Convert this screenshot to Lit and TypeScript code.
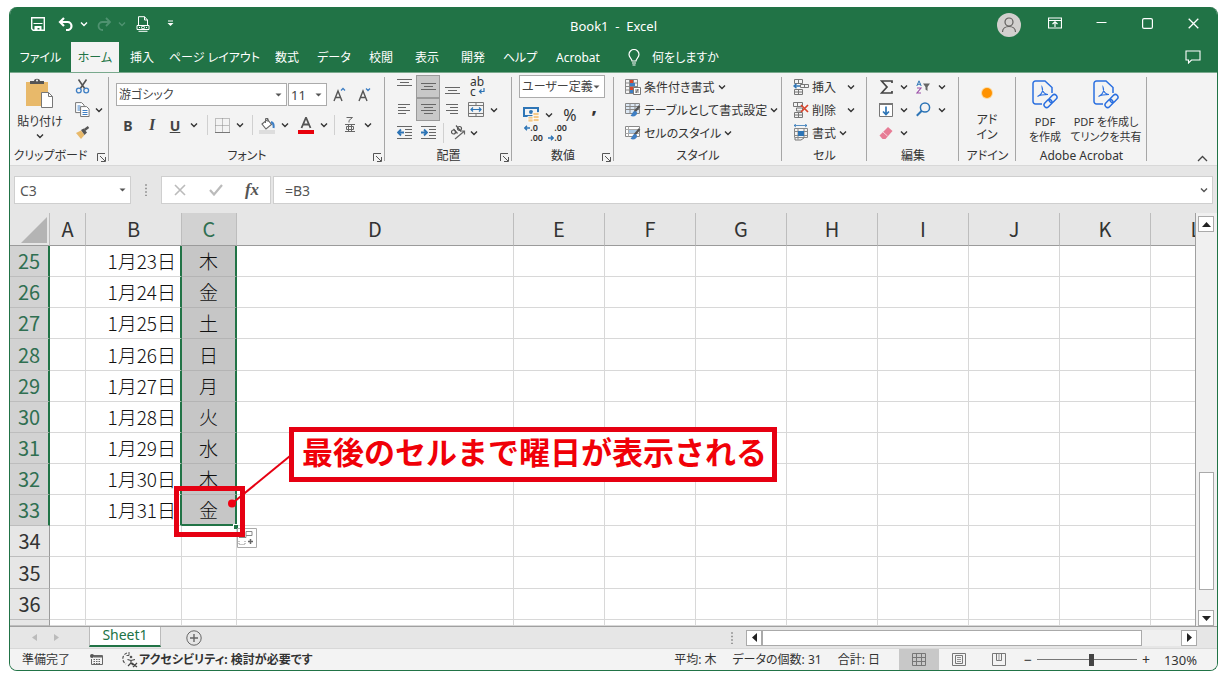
import { LitElement, html, css, svg, TemplateResult, SVGTemplateResult } from "lit";
import { customElement, state } from "lit/decorators.js";
import { classMap } from "lit/directives/class-map.js";

const icon = (w: number, h: number, body: SVGTemplateResult) =>
  html`<svg width=${w} height=${h} viewBox="0 0 ${w} ${h}" fill="none" aria-hidden="true">${body}</svg>`;

const chevron = (color = "#333") =>
  icon(8, 6, svg`<path d="M1 1.5 4 4.5 7 1.5" stroke=${color} stroke-width="1.4"/>`);

const caret = () => icon(7, 4, svg`<path d="M0.5 0.5h6L3.5 3.5z" fill="#555"/>`);

const lines = (rows: number[][]) =>
  svg`${rows.map(([x, y, w]) => svg`<path d="M${x} ${y + 0.5}h${w}" stroke="#666" stroke-width="1"/>`)}`;

const icons = {
  save: icon(14, 14, svg`<path d="M.7.7h12.6v12.6H2.2L.7 11.8z" stroke="#fff" stroke-width="1.4"/><path d="M2.5 6.500h9" stroke="#fff" stroke-width="1.2"/><path d="M3.5 9h7v4.5h-2V11h-2v2.5h-3z" fill="#fff"/>`),
  undo: icon(16, 14, svg`<path d="M6 1 2 5l4 4M2 5h7.5a4 4 0 0 1 0 8H8" stroke="#fff" stroke-width="2.200"/>`),
  redo: icon(16, 14, svg`<path d="m10 1 4 4-4 4M14 5H6.5a4 4 0 0 0 0 8H7" stroke="#4f9270" stroke-width="1.8"/>`),
  print: icon(14, 16, svg`<path d="M2.5 9V.7h6L11.500 4v5M8.500.7V4h3" stroke="#fff"/><path d="M1 9.500h12v4H1z" stroke="#fff"/><circle cx="7" cy="11.500" r="1.500" stroke="#fff"/><path d="M3 11.500h1m6 0h1M2.500 15.300h9" stroke="#fff"/>`),
  more: icon(7, 7, svg`<path d="M1 1h5" stroke="#fff"/><path d="M.5 3h6l-3 3z" fill="#fff"/>`),
  avatar: icon(24, 24, svg`<circle cx="12" cy="12" r="12" fill="#d2d0ce"/><circle cx="12" cy="9" r="4" stroke="#605e5c" stroke-width="1.2"/><path d="M5.500 19c0-3.500 3-5.500 6.500-5.500s6.500 2 6.500 5.500" stroke="#605e5c" stroke-width="1.2"/>`),
  ribbonMode: icon(14, 12, svg`<path d="M.5 1h13v10H.5zM.5 3.500h13" stroke="#fff" stroke-width="1.200"/><path d="M7 10V5M4.500 7 7 4.700 9.500 7" stroke="#fff" stroke-width="1.200"/>`),
  min: icon(11, 11, svg`<path d="M.5 4.500h10" stroke="#fff"/>`),
  max: icon(11, 11, svg`<rect x=".6" y=".6" width="9.800" height="9.800" rx="1.500" stroke="#fff" stroke-width="1.200"/>`),
  close: icon(11, 11, svg`<path d="m.7.7 9.600 9.600M10.300.7.7 10.300" stroke="#fff" stroke-width="1.300"/>`),
  comment: icon(16, 14, svg`<path d="M1 1h14v9H6.500L3.500 13v-3H1z" stroke="#fff" stroke-width="1.100"/>`),
  bulb: icon(12, 17, svg`<path d="M4 12c0-2-3-3.500-3-6.500a5 5 0 0 1 10 0C11 8.500 8 10 8 12z" stroke="#fff" stroke-width="1.200"/><path d="M4 14h4M4.500 16h3" stroke="#fff" stroke-width="1.200"/>`),
  paste: icon(30, 32, svg`<rect x="1" y="4" width="22" height="24" fill="#e8b96a"/><path d="M5 6V3h4c0-3 6-3 6 0h4v3z" fill="#555"/><circle cx="12" cy="2.500" r="1" fill="#f3f3f3"/><path d="M16.500 14.500h7l4 4v11h-11z" fill="#fff" stroke="#777"/><path d="M23.500 14.500v4h4" stroke="#777"/>`),
  cut: icon(15, 15, svg`<path d="M3.500.5 10 10M11.500.5 5 10" stroke="#555" stroke-width="1.600"/><circle cx="3.800" cy="11.500" r="2.400" stroke="#3f7fc4" stroke-width="1.300"/><circle cx="11.200" cy="11.500" r="2.400" stroke="#3f7fc4" stroke-width="1.300"/>`),
  copy: icon(15, 15, svg`<path d="M.6.6h6l2.500 2.500v7.500H.6z" fill="#fff" stroke="#777"/><path d="M2.500 4h3m-3 2h3m-3 2h3" stroke="#3f7fc4"/><path d="M5.600 4.600h6l2.500 2.500v7.400H5.600z" fill="#fff" stroke="#777"/><path d="M7.500 8.500h5m-5 2h5m-5 2h5" stroke="#3f7fc4"/>`),
  brush: icon(15, 13, svg`<path d="m1 7 5-2.500L9.500 9 6 13z" fill="#e8b96a"/><path d="m6 4 2.500-1.500 3.500 4L9.500 9z" fill="#555"/><path d="m9.500 4 4-3" stroke="#555" stroke-width="2.400"/>`),
  grow: icon(14, 16, svg`<path d="M1 14 5 4l4 10M2.500 10.500h5" stroke="#555" stroke-width="1.400"/><path d="m8 3.500 2-2 2 2" stroke="#3f7fc4" stroke-width="1.300"/>`),
  shrink: icon(14, 16, svg`<path d="M1 14 5 4l4 10M2.500 10.500h5" stroke="#555" stroke-width="1.400"/><path d="m8 1.500 2 2 2-2" stroke="#3f7fc4" stroke-width="1.300"/>`),
  borders: icon(15, 15, svg`<path d="M.5.5h14v14H.5zM7.500.5v14M.5 7.500h14" stroke="#888" stroke-dasharray="1 1"/><path d="M0 14.500h15" stroke="#777"/>`),
  fill: icon(16, 17, svg`<path d="m3 7 5.500-4.500 4 5L7 12z" fill="#fff" stroke="#666" stroke-width="1.100"/><path d="M6.500 6V1.500h2.500V5" stroke="#666"/><path d="M12 5c3 1 3 3 2.500 6" stroke="#3f7fc4" stroke-width="2"/><path d="M0 13h16v4H0z" fill="#ddd"/>`),
  fontColor: icon(16, 17, svg`<path d="M3.500 11 8 .5l4.500 10.500M5 7.500h6" stroke="#555" stroke-width="1.800"/><path d="M0 13h16v4H0z" fill="#e8000b"/>`),
  phonetic: icon(12, 16, svg`<path d="M2.500.5h6L5 3.500v2M1 7.500h10M1 14.500h10M4.500 7.500v7M7.500 7.500v7M2.500 9.500h7v3h-7z" stroke="#666"/>`),
  top: icon(15, 17, lines([[0, 1, 15], [3, 4, 9], [0, 7, 15]])),
  middle: icon(15, 17, lines([[0, 5, 15], [3, 8, 9], [0, 11, 15]])),
  bottom: icon(15, 17, lines([[0, 9, 15], [3, 12, 9], [0, 15, 15]])),
  left: icon(12, 13, lines([[0, 1, 12], [0, 4, 8], [0, 7, 12], [0, 10, 8]])),
  center: icon(15, 13, lines([[0, 1, 15], [3, 4, 9], [0, 7, 15], [3, 10, 9]])),
  right: icon(12, 13, lines([[0, 1, 12], [4, 4, 8], [0, 7, 12], [4, 10, 8]])),
  outdent: icon(15, 13, svg`${lines([[0, 0, 15], [8, 3, 7], [8, 6, 7], [8, 9, 7], [0, 12, 15]])}<path d="M7 6.500H1M4 3.500l-3 3 3 3" stroke="#2e75b6" stroke-width="1.800"/>`),
  indent: icon(15, 13, svg`${lines([[0, 0, 15], [8, 3, 7], [8, 6, 7], [8, 9, 7], [0, 12, 15]])}<path d="M0 6.500h6M3 3.500l3 3-3 3" stroke="#2e75b6" stroke-width="1.800"/>`),
  wrapArrow: icon(7, 7, svg`<path d="M6 0v3.500H1.500M3.500 1.500l-2 2 2 2" stroke="#2e75b6" stroke-width="1.200"/>`),
  merge: icon(16, 15, svg`<path d="M.5.5h15v14H.5zM.5 3.500h15m-15 8h15M8 .5v3m0 8v3" stroke="#777"/><path d="M3 7.500h10M5 5.500l-2 2 2 2m6-4 2 2-2 2" stroke="#2e75b6" stroke-width="1.200"/>`),
  orient: icon(16, 15, svg`<circle cx="3.500" cy="7" r="2" stroke="#555" stroke-width="1.200"/><path d="m3.500 4 4 4.500M6 .5l5 6" stroke="#555" stroke-width="1.200"/><circle cx="9.500" cy="3.500" r="2" stroke="#555" stroke-width="1.200"/><path d="m5 14 9.500-8M11 6h3.500v3.500" stroke="#666" stroke-width="1.200"/>`),
  currency: icon(17, 17, svg`<path d="M1 2h14v8H1z" stroke="#2e75b6" stroke-width="2"/><circle cx="8" cy="6" r="2" fill="#2e75b6"/><g fill="#f4c98a" stroke="#fff" stroke-width=".7"><rect x="10" y="6.500" width="6" height="3"/><rect x="10" y="9.500" width="6" height="3"/><rect x="10" y="12.500" width="6" height="3"/><rect x="5" y="10.500" width="5" height="3"/><rect x="5" y="13" width="5" height="3"/></g>`),
  arrowL: icon(6, 6, svg`<path d="M6 3H1M3 .8.8 3 3 5.200" stroke="#2e75b6" stroke-width="1.400"/>`),
  arrowR: icon(6, 6, svg`<path d="M0 3h5M3 .8 5.200 3 3 5.200" stroke="#2e75b6" stroke-width="1.400"/>`),
  condFormat: icon(16, 16, svg`<path d="M.5.5h12v14H.5zM.5 4h12m-12 3.500h12M.5 11h12M4.500.5v14m4-14v14" stroke="#888"/><path d="M5 1h3v3H5zM5 8h4v3H5z" fill="#d9442b"/><path d="M5 4h5v3H5zM5 11h3v3H5z" fill="#3f7fc4"/><path d="M8.500 8.500h7v7h-7z" fill="#fff" stroke="#777"/><path d="M10 11h4m-4 2h4m-1-3-2 4" stroke="#555" stroke-width=".8"/>`),
  tableFormat: icon(16, 16, svg`<path d="M.5 1.500h14v10H.5zM.5 4.500h14m-14 3h14M5 1.500v10m5-10v10" fill="#dce8f4" stroke="#888"/><path d="m14.500 4-5 6" stroke="#555" stroke-width="2.200"/><path d="M10.500 9c-3 0-3 3-5 4.500 2.500 2 7 .5 6.500-3z" fill="#3f7fc4"/>`),
  cellStyle: icon(16, 16, svg`<path d="M.5 1.500h14v10H.5z" fill="#fff" stroke="#888"/><path d="M4 4.500h8v4H4z" fill="#a9c9e6"/><path d="M3.500 1.500v10M.5 4.500h14m-14 4h14" stroke="#aaa"/><path d="m14.500 4-5 6" stroke="#555" stroke-width="2.200"/><path d="M10.500 9c-3 0-3 3-5 4.500 2.500 2 7 .5 6.500-3z" fill="#3f7fc4"/>`),
  insert: icon(16, 16, svg`<path d="M1.500.5h8v4h-8zm4 0v4M1.500 10.500h8v5h-8zm0 2.500h8m-4-2.500v5M7.500 5.500h8v3h-8zm4 0v3" stroke="#777"/><path d="M7 7H1M3.500 4.800 1 7l2.500 2.200" stroke="#2e75b6" stroke-width="1.400"/>`),
  remove: icon(16, 16, svg`<path d="M.5.5h9v4h-9zm4 0v4M3.500 6h6v3h-6zM1.500 10.500h8v5h-8zm0 2.500h8m-4-2.500v5" stroke="#777"/><path d="m8 3 7 7m0-7-7 7" stroke="#d9442b" stroke-width="1.700"/>`),
  format: icon(16, 17, svg`<path d="M1 1.500h13M3 0 1 1.500 3 3m9-3 2 1.500L12 3" stroke="#2e75b6" stroke-width=".8"/><path d="M1.500 4.500h13v9h-13zM1.500 7.500h13m-13 4h13M5 4.500v11m6-11v9" stroke="#888"/><path d="M5 7h6v5H5z" fill="#2e75b6"/><path d="M2 14v2h6l3-2" stroke="#777"/>`),
  sigma: icon(13, 14, svg`<path d="M12 3V1H1.500L7 7l-5.500 6H12v-2" stroke="#444" stroke-width="1.700"/>`),
  fillDown: icon(14, 14, svg`<path d="M.5.5h13v13H.5z" fill="#fff" stroke="#777"/><path d="M0 1h14" stroke="#777" stroke-width="2"/><path d="M7 3.500v8M4 8.500l3 3 3-3" stroke="#2e75b6" stroke-width="1.700"/>`),
  eraser: icon(14, 12, svg`<path d="m9 0 4.500 4L6.500 12H3.500L.5 8.500z" fill="#e77c95"/><path d="m4 5 4.500 4" stroke="#f8d3da"/>`),
  sort: icon(15, 14, svg`<path d="M.8 6 3 .8 5.200 6M1.500 4.300h3" stroke="#2e75b6"/><path d="M1 8h4l-4 5h4" stroke="#9b4fa8" stroke-width="1.100"/><path d="M7 3.500h7L11.500 7v4L9.500 9.500V7z" fill="#666"/>`),
  find: icon(15, 15, svg`<circle cx="9" cy="5.500" r="4.600" stroke="#2e75b6" stroke-width="1.500"/><path d="m5.800 8.800-5 5" stroke="#2e75b6" stroke-width="2"/>`),
  addin: icon(14, 14, svg`<circle cx="7" cy="7" r="6" fill="#fbd9a0"/><circle cx="7" cy="7" r="5" fill="#ff9200"/>`),
  pdf: icon(26, 29, svg`<path d="M10 24H3.500A2.500 2.500 0 0 1 1 21.500v-18A2.500 2.500 0 0 1 3.500 1H13l7 6.500V13" stroke="#2a6fe0" stroke-width="1.500"/><path d="M5.500 16.500c5-2 6-7 4.500-9.500 0 5 3 7.500 6 7.500-4 0-8 .5-10.500 2z" stroke="#2a6fe0" stroke-width="1.100"/><g stroke="#2a6fe0" stroke-width="1.500"><rect x="-4.500" y="-2.600" width="9" height="5.200" rx="2.600" transform="translate(21 18.500) rotate(-45)"/><rect x="-4.500" y="-2.600" width="9" height="5.200" rx="2.600" transform="translate(16 23.500) rotate(-45)"/></g>`),
  launcher: icon(9, 9, svg`<path d="M.5 8V.5H8M3 3l5 5M8.500 4v4.500H4" stroke="#555"/>`),
  collapse: icon(11, 7, svg`<path d="m1 6 4.500-4.500L10 6" stroke="#444" stroke-width="1.300"/>`),
  cancel: icon(12, 12, svg`<path d="m1 1 10 10M11 1 1 11" stroke="#bbb" stroke-width="1.600"/>`),
  enter: icon(14, 12, svg`<path d="m1 6 4 4.500L13 1" stroke="#bbb" stroke-width="2.200"/>`),
  dots: icon(2, 12, svg`<path d="M0 1h2M0 4.500h2M0 8h2M0 11.500h2" stroke="#999" stroke-width="1.500"/>`),
  up: icon(9, 5, svg`<path d="M0 5 4.500 0 9 5z" fill="#222"/>`),
  down: icon(9, 5, svg`<path d="M0 0h9L4.500 5z" fill="#222"/>`),
  prev: icon(5, 9, svg`<path d="M5 0v9L0 4.500z" fill="#222"/>`),
  next: icon(5, 9, svg`<path d="M0 0v9l5-4.500z" fill="#222"/>`),
  prevDim: icon(5, 7, svg`<path d="M5 0v7L0 3.500z" fill="#bbb"/>`),
  nextDim: icon(5, 7, svg`<path d="M0 0v7l5-3.500z" fill="#bbb"/>`),
  add: icon(16, 16, svg`<circle cx="8" cy="8" r="7.200" stroke="#666"/><path d="M4 8h8M8 4v8" stroke="#666" stroke-width="1.400"/>`),
  macro: icon(13, 12, svg`<path d="M3 1.500h9.500v9H1.500V5" stroke="#666"/><path d="M4 2.500h8" stroke="#666" stroke-width="2"/><path d="M3.500 5.500h7m-7 2h7m-7 2h7" stroke="#666" stroke-dasharray="1.500 1"/><circle cx="2" cy="2" r="2" fill="#555"/>`),
  access: icon(17, 16, svg`<path d="M6 1a6 6 0 0 0-1 11" stroke="#555" stroke-dasharray="3 1.500" stroke-width="1.200"/><path d="M8 0v3.500H5.500" stroke="#555"/><circle cx="10" cy="5" r="1.300" fill="#555"/><path d="M6.500 7.500 10 8.500l4-1M10 8v3l-3 3m3-3 2 2m-1-2 5 4m0-4-4 4" stroke="#444" stroke-width="1.200"/>`),
  normal: icon(14, 13, svg`<path d="M.5.5h13v12H.5zM.5 4.500h13m-13 4h13M4.500.5v12m5-12v12" stroke="#777"/>`),
  page: icon(14, 13, svg`<path d="M.5.5h13v12H.5zM3.500 2.500h7v8h-7z" stroke="#777"/><path d="M5 4.500h4M5 6.500h4M5 8.500h4" stroke="#777" stroke-width=".8"/>`),
  breaks: icon(14, 13, svg`<path d="M.5.5h13v12H.5zM4.500.5v7h5v-7" stroke="#777"/><path d="M7 .5v7" stroke="#999"/>`),
  fillOptions: icon(20, 20, svg`<path d="M.5.500h19v19H.5z" fill="#fff" stroke="#aaa"/><path d="M2 9.500h7v-6h6v4H9" stroke="#888"/><path d="M2 13v3.500h6V13" stroke="#888" stroke-dasharray="1 1"/><path d="M11 13.500h5M13.500 11v5" stroke="#666" stroke-width="1.500"/>`),
};

const TABS = ["ファイル", "ホーム", "挿入", "ページ レイアウト", "数式", "データ", "校閲", "表示", "開発", "ヘルプ", "Acrobat"];
const COLUMNS = ["A", "B", "C", "D", "E", "F", "G", "H", "I", "J", "K", "L"];
const WEEKDAYS = ["木", "金", "土", "日", "月", "火", "水", "木", "金"];
const FIRST_ROW = 25;
const ROWS = Array.from({ length: 13 }, (_, i) => ({
  n: FIRST_ROW + i,
  date: i < WEEKDAYS.length ? `1月${23 + i}日` : "",
  day: WEEKDAYS[i] ?? "",
}));

@customElement("app-root")
export class AppRoot extends LitElement {
  @state() private activeTab = "ホーム";
  @state() private zoom = 130;

  static styles = css`
    :host {
      display: block;
      font-family: "Noto Sans", "Noto Sans CJK JP", sans-serif;
      font-feature-settings: "palt";
      font-size: 12px;
      color: #333;
    }
    * { box-sizing: border-box; }
    svg { display: block; flex: none; }
    button, input, select {
      font: inherit; font-feature-settings: inherit; color: inherit;
      margin: 0; padding: 0; border: 0; background: none; border-radius: 0; outline: none;
    }
    button { display: flex; align-items: center; justify-content: center; white-space: nowrap; }
    .page { height: 100vh; padding: 7px 8px 9px 9px; background: #fff; }
    .window {
      height: 100%; display: flex; flex-direction: column; overflow: hidden;
      border: 1px solid #217346; border-top: 0; border-radius: 8px; background: #e6e6e6;
    }

    .title { height: 35px; display: grid; grid-template-columns: 1fr auto 1fr; background: #217346; color: #fff; }
    .title h1 { margin: 0; padding-top: 2px; align-self: center; font-size: 13px; line-height: 18px; font-weight: 400; white-space: pre; }
    .quick { display: grid; grid-template-columns: 28px 28px 8px 32px 4px 38px 16px; padding: 0 0 2px 14px; }
    .sys { display: flex; justify-content: flex-end; padding-right: 1px; }
    .sys button { width: 46px; padding-bottom: 3px; }
    .sys .me { padding: 0; }

    .tabs { height: 30px; display: flex; background: #217346; color: #fff; }
    .tablist { display: grid; grid-template-columns: 61px 48px 46px 99px 46px 48px 46px 46px 46px 48px 68px; }
    .tabs .on { background: #f3f3f3; color: #217346; }
    .tell { padding: 0 16px; gap: 12px; }
    .comment { width: 46px; margin: 0 1px 0 auto; }

    .ribbon { height: 94px; display: flex; background: #f3f3f3; border-top: 1px solid #79a98d; border-bottom: 1px solid #d8d8d8; position: relative; }
    .group { position: relative; display: flex; flex-direction: column; padding-top: 2px; }
    .group::after { content: ""; position: absolute; right: 0; top: 4px; bottom: 4px; width: 1px; background: #a6a6a6; }
    .body { height: 69px; }
    .label { display: flex; align-items: center; justify-content: center; height: 22px; padding-top: 3px; line-height: 16px; white-space: nowrap; }
    .launch { position: absolute; right: 3px; bottom: 3px; }
    .g-clip { width: 99px; } .g-font { width: 276px; } .g-align { width: 127px; } .g-num { width: 102px; }
    .g-style { width: 168px; } .g-cell { width: 85px; } .g-edit { width: 92px; } .g-addin { width: 57px; } .g-pdf { width: 131px; }
    .g-clip .label { padding-right: 18px; }
    .clip { display: grid; grid-template-columns: 60px 38px; }
    .paste { flex-direction: column; padding: 3px 0 5px; justify-content: space-between; line-height: 14px; }
    .stack { display: grid; grid-template-rows: repeat(3, 23px); }
    .row { display: flex; align-items: center; }
    .clip .row > button:first-child { width: 15px; height: 23px; justify-content: flex-start; }
    .clip .row { padding-left: 5px; gap: 1px; justify-content: flex-start; }
    .clip .row > .arrow { width: 15px; }

    .field { position: relative; display: flex; height: 23px; background: #fff; border: 1px solid #ababab; }
    .field select { appearance: none; width: 100%; padding-left: 2px; line-height: 20px; color: #444; }
    .field svg { position: absolute; right: 4px; top: 9px; pointer-events: none; }
    .font { padding: 8px 0 0 7px; display: flex; flex-direction: column; gap: 8px; }
    .font .pick { display: grid; grid-template-columns: 171px 39px 24px 24px; gap: 1px; }
    .size { font-size: 13px; }
    .tools { display: grid; grid-template-columns: 24px 24px 22px 16px 10px 20px 16px 8px 22px 14px 28px 8px 12px 20px 16px; height: 22px; font-size: 14px; color: #444; }
    .sep { width: 1px; height: 20px; background: #d0d0d0; justify-self: center; align-self: center; }
    .b { font-weight: 700; }
    .i { font-style: italic; font-weight: 700; font-family: "Liberation Serif", serif; font-size: 16px; }
    .u { font-weight: 700; text-decoration: underline; }

    .align { display: grid; grid-template-columns: repeat(4, 24px) 12px; grid-template-rows: repeat(3, 23px); padding-left: 7px; }
    .align .sel { background: #c8c8c8; border: 1px solid #9a9a9a; }
    .align .last { grid-column: 3 / span 3; display: grid; grid-template-columns: 6px 24px 8px; }
    .wrap { flex-direction: column; align-items: flex-start; font-size: 12px; line-height: 10px; padding-left: 6px; }
    .wrap span { display: flex; gap: 2px; align-items: center; }
    .num { padding-left: 7px; display: grid; grid-template-rows: 23px 23px 23px; }
    .num .field { width: 86px; }
    .num .cur { display: grid; grid-template-columns: 24px 12px 30px 18px; }
    .pct { font-size: 16px; }
    .comma { font-size: 20px; font-weight: 700; padding-top: 6px; }
    .dec { width: 24px; flex-direction: column; font-size: 9px; line-height: 10px; font-weight: 600; }
    .dec span { display: flex; align-items: center; }
    .dec .end { align-self: flex-end; }
    .list { padding-left: 11px; justify-items: start; }
    .list button { gap: 3px; height: 23px; }
    .list .wide { gap: 3px; width: 62px; justify-content: flex-start; }
    .wide svg:last-child { margin-left: auto; }
    .edit { display: grid; grid-template-columns: 26px 10px 28px 10px; grid-template-rows: repeat(3, 23px); padding-left: 6px; }
    .big { flex-direction: column; gap: 5px; line-height: 15px; padding-top: 5px; text-align: center; justify-content: flex-start; }
    .g-addin .big { width: 56px; gap: 12px; padding-top: 11px; }
    .pdfs { display: grid; grid-template-columns: 50px 72px; padding-left: 4px; }
    .pdfs .big { font-size: 11px; }
    .collapse { position: absolute; right: 9px; bottom: 3px; }

    .formula { height: 47px; display: flex; padding: 10px 4px 9px; font-size: 14px; color: #555; }
    .box { display: flex; align-items: center; background: #fff; border: 1px solid #cfcfcf; }
    .name { width: 117px; padding: 0 4px 0 5px; }
    .name input { flex: 1; min-width: 0; }
    .grip { width: 30px; display: flex; align-items: center; justify-content: center; }
    .fx { width: 110px; margin-right: 2px; display: grid; grid-template-columns: repeat(3, 1fr); }
    .fx i { font-family: "Liberation Serif", serif; font-size: 17px; font-weight: 700; }
    .input { flex: 1; padding: 0 4px 0 11px; }
    .input input { flex: 1; }

    .work { flex: 1; min-height: 0; display: grid; grid-template-columns: 1fr 21px; position: relative; }
    .sheet { overflow: hidden; min-height: 0; min-width: 0; border-right: 1px solid #a0a0a0; }
    table { display: grid; grid-template-rows: 33px 1fr; height: 100%; width: max-content; font-size: 20px; line-height: 24px; }
    thead { display: grid; }
    tbody { display: grid; grid-template-rows: repeat(12, 5fr) 1fr; min-height: 0; background: #fff; }
    tr { display: grid; grid-template-columns: 40px 36px 96px 55px 277px repeat(8, 91px); min-height: 0; }
    th, td { display: flex; align-items: center; justify-content: center; padding: 0; font-family: "Noto Sans CJK JP", sans-serif; font-weight: 400; overflow: hidden; border-right: 1px solid #d8d8d8; border-bottom: 1px solid #d8d8d8; min-height: 0; }
    thead th { background: #e6e6e6; color: #333; border-right-color: #bdbdbd; border-bottom-color: #9b9b9b; }
    thead .hot { background: #d2d2d2; color: #2f6f51; }
    thead .corner { justify-content: flex-end; align-items: flex-end; padding: 0 2px 2px 0; }
    tbody th { background: #e6e6e6; color: #333; border-right-color: #9b9b9b; border-bottom-color: #bdbdbd; }
    tbody .hot { background: #d2d2d2; color: #2f6f51; border-right: 2px solid #217346; }
    td { font-size: 19px; font-weight: 300; font-feature-settings: normal; color: #111; }
    .date { justify-content: flex-end; padding-right: 4px; }
    .picked { background: #c6c6c6; border-right: 2px solid #217346; border-bottom-color: #b4b4b4; }
    .edge { border-right: 2px solid #217346; }
    .lastpick { border-bottom: 2px solid #217346; }

    .vbar { display: flex; flex-direction: column; background: #f0f0f0; padding: 3px 2px 0; }
    .vbar button, .hbar button { width: 16px; height: 16px; flex: none; background: #fff; border: 1px solid #aaa; }
    .vtrack { flex: 1; display: grid; grid-template-rows: 241fr 119fr 20fr; }
    .thumb { background: #fff; border: 1px solid #aaa; }
    .vtrack .thumb { grid-row: 2; margin: 0 1px; }

    .note { position: absolute; left: 279px; top: 214px; padding: 3px 5px 11px 8px; border: 5px solid #e60012; background: #fff; color: #f00008; font-weight: 700; font-size: 31px; line-height: 31px; font-family: "Noto Sans CJK JP", sans-serif; font-feature-settings: normal; white-space: nowrap; }
    .ring { position: absolute; left: 164px; top: 273px; width: 71px; height: 51px; border: 5px solid #e60012; }
    .pointer { position: absolute; left: 216px; top: 240px; }
    .smart { position: absolute; left: 227px; top: 315px; }
    .handle { position: absolute; left: 223px; top: 311px; width: 5px; height: 5px; background: #217346; border: 1px solid #fff; border-width: 1px 0 0 1px; }

    .sheets { height: 22px; display: flex; align-items: stretch; border-top: 1px solid #a0a0a0; }
    .arrows { width: 79px; display: flex; align-items: center; justify-content: center; gap: 17px; padding-right: 8px; }
    .tab { width: 72px; height: 20px; background: #fff; color: #217346; font-size: 14px; line-height: 16px; padding-bottom: 2px; border-bottom: 2px solid #217346; border-left: 1px solid #bbb; border-right: 1px solid #bbb; }
    .plus { margin-left: 25px; }
    .hbar { margin-left: auto; width: 488px; display: flex; align-items: center; padding-right: 20px; }
    .hbar .grip { width: 17px; justify-content: flex-start; padding-left: 2px; }
    .htrack { flex: 1; height: 16px; display: grid; grid-template-columns: 381fr 39fr; background: #f0f0f0; }

    .status { height: 22px; display: flex; align-items: center; padding: 0 20px 0 12px; background: #f3f3f3; border-top: 1px solid #d8d8d8; line-height: 16px; white-space: nowrap; }
    .macro { margin: 0 18px 0 20px; }
    .a11y { gap: 1px; font-weight: 700; }
    .stats { margin-left: auto; display: flex; gap: 16px; padding-right: 19px; }
    .view { width: 40px; height: 21px; }
    .view.on { background: #c8c8c8; }
    .zoomer { display: flex; align-items: center; font-size: 14px; }
    .zoomer button { width: 18px; }
    input[type="range"] { appearance: none; width: 100px; height: 12px; background: linear-gradient(#777, #777) center / 100% 1px no-repeat; }
    input[type="range"]::-webkit-slider-thumb { appearance: none; width: 5px; height: 12px; background: #444; }
    .pctl { width: 42px; text-align: right; font-size: 13px; }
  `;

  private btn(label: string, content: unknown, cls = "") {
    return html`<button class=${cls} aria-label=${label}>${content}</button>`;
  }

  private arrow(label: string) {
    return html`<button class="arrow" aria-label=${label}>${chevron()}</button>`;
  }

  private group(cls: string, label: string, body: TemplateResult, launcher = false) {
    return html`<section class="group ${cls}" aria-label=${label}>
      ${body}
      <div class="label">${label}</div>
      ${launcher ? html`<button class="launch" aria-label="${label}の設定">${icons.launcher}</button>` : ""}
    </section>`;
  }

  private ribbon() {
    const sep = html`<span class="sep"></span>`;
    return html`<div class="ribbon">
      ${this.group("g-clip", "クリップボード", html`<div class="body clip">
        <button class="paste">${icons.paste}<span>貼り付け</span>${chevron()}</button>
        <div class="stack">
          <div class="row">${this.btn("切り取り", icons.cut)}</div>
          <div class="row">${this.btn("コピー", icons.copy)}${this.arrow("コピーの種類")}</div>
          <div class="row">${this.btn("書式のコピー", icons.brush)}</div>
        </div></div>`, true)}
      ${this.group("g-font", "フォント", html`<div class="body font">
        <div class="pick">
          <label class="field"><select aria-label="フォント名"><option>游ゴシック</option></select>${caret()}</label>
          <label class="field size"><select aria-label="フォント サイズ"><option>11</option></select>${caret()}</label>
          ${this.btn("拡大", icons.grow)}${this.btn("縮小", icons.shrink)}
        </div>
        <div class="tools">
          <button class="b">B</button><button class="i">I</button><button class="u">U</button>${this.arrow("下線")}${sep}
          ${this.btn("罫線", icons.borders)}${this.arrow("罫線の種類")}${sep}
          ${this.btn("塗りつぶし", icons.fill)}${this.arrow("塗りつぶしの色")}
          ${this.btn("フォントの色", icons.fontColor)}${this.arrow("色の選択")}${sep}
          ${this.btn("ふりがな", icons.phonetic)}${this.arrow("ふりがなの設定")}
        </div></div>`, true)}
      ${this.group("g-align", "配置", html`<div class="body align">
        ${this.btn("上揃え", icons.top)}${this.btn("上下中央", icons.middle, "sel")}${this.btn("下揃え", icons.bottom)}
        <button class="wrap" aria-label="折り返し"><span>ab</span><span>c${icons.wrapArrow}</span></button><i></i>
        ${this.btn("左揃え", icons.left)}${this.btn("中央揃え", icons.center, "sel")}${this.btn("右揃え", icons.right)}
        ${this.btn("結合", icons.merge)}${this.arrow("結合の種類")}
        ${this.btn("インデント減", icons.outdent)}${this.btn("インデント増", icons.indent)}
        <div class="last">${sep}${this.btn("方向", icons.orient)}${this.arrow("方向の種類")}</div>
      </div>`, true)}
      ${this.group("g-num", "数値", html`<div class="body num">
        <label class="field"><select aria-label="表示形式"><option>ユーザー定義</option></select>${caret()}</label>
        <div class="cur">${this.btn("通貨", icons.currency)}${this.arrow("通貨の種類")}<button class="pct">%</button><button class="comma">’</button></div>
        <div class="row">
          <button class="dec" aria-label="小数点以下を増やす"><span>${icons.arrowL}.0</span><span class="end">.00</span></button>
          <button class="dec" aria-label="小数点以下を減らす"><span class="end">.00</span><span>${icons.arrowR}.0</span></button>
        </div></div>`, true)}
      ${this.group("g-style", "スタイル", html`<div class="body stack list">
        <button>${icons.condFormat}条件付き書式 ${chevron()}</button>
        <button>${icons.tableFormat}テーブルとして書式設定 ${chevron()}</button>
        <button>${icons.cellStyle}セルのスタイル ${chevron()}</button></div>`)}
      ${this.group("g-cell", "セル", html`<div class="body stack list">
        <button class="wide">${icons.insert}挿入 ${chevron()}</button>
        <button class="wide">${icons.remove}削除 ${chevron()}</button>
        <button>${icons.format}書式 ${chevron()}</button></div>`)}
      ${this.group("g-edit", "編集", html`<div class="body edit">
        ${this.btn("合計", icons.sigma)}${this.arrow("合計の種類")}${this.btn("並べ替え", icons.sort)}${this.arrow("並べ替えの種類")}
        ${this.btn("フィル", icons.fillDown)}${this.arrow("フィルの種類")}${this.btn("検索", icons.find)}${this.arrow("検索の種類")}
        ${this.btn("クリア", icons.eraser)}${this.arrow("クリアの種類")}</div>`)}
      ${this.group("g-addin", "アドイン", html`<div class="body">
        <button class="big">${icons.addin}<span>アド<br>イン</span></button></div>`)}
      ${this.group("g-pdf", "Adobe Acrobat", html`<div class="body pdfs">
        <button class="big">${icons.pdf}<span>PDF<br>を作成</span></button>
        <button class="big">${icons.pdf}<span>PDF を作成し<br>てリンクを共有</span></button></div>`)}
      <button class="collapse" aria-label="リボンを折りたたむ">${icons.collapse}</button>
    </div>`;
  }

  private grid() {
    return html`<table>
      <thead><tr>
        <th class="corner">${icon(26, 26, svg`<path d="M26 0v26H0z" fill="#b4b4b4"/>`)}</th>
        ${COLUMNS.map((c) => html`<th class=${classMap({ hot: c === "C" })}>${c}</th>`)}
      </tr></thead>
      <tbody>${ROWS.map((r, i) => {
        const on = !!r.day;
        return html`<tr>
          <th class=${classMap({ hot: on })}>${i < 12 ? r.n : ""}</th>
          ${COLUMNS.map((c) => c === "B"
            ? html`<td class=${classMap({ date: true, edge: on })}>${r.date}</td>`
            : c === "C"
              ? html`<td class=${classMap({ picked: on, lastpick: on && i === WEEKDAYS.length - 1 })}>${r.day}</td>`
              : html`<td></td>`)}
        </tr>`;
      })}</tbody>
    </table>`;
  }

  render() {
    return html`<div class="page"><main class="window">
      <header class="title">
        <div class="quick">
          ${this.btn("保存", icons.save)}${this.btn("元に戻す", icons.undo)}${this.btn("履歴", chevron("#fff"))}
          ${this.btn("やり直し", icons.redo)}${this.btn("やり直し履歴", chevron("#4f9270"))}
          ${this.btn("印刷プレビュー", icons.print)}${this.btn("カスタマイズ", icons.more)}
        </div>
        <h1>Book1  -  Excel</h1>
        <div class="sys">
          ${this.btn("アカウント", icons.avatar, "me")}${this.btn("リボンの表示", icons.ribbonMode)}${this.btn("最小化", icons.min)}
          ${this.btn("最大化", icons.max)}${this.btn("閉じる", icons.close)}
        </div>
      </header>
      <nav class="tabs">
        <div class="tablist">${TABS.map((t) => html`<button class=${classMap({ on: t === this.activeTab })} @click=${() => (this.activeTab = t)}>${t}</button>`)}</div>
        <button class="tell">${icons.bulb}何をしますか</button>
        ${this.btn("コメント", icons.comment, "comment")}
      </nav>
      ${this.ribbon()}
      <div class="formula">
        <label class="box name"><input aria-label="名前ボックス" .value=${"C3"}>${caret()}</label>
        <span class="grip">${icons.dots}</span>
        <div class="box fx">${this.btn("キャンセル", icons.cancel)}${this.btn("入力", icons.enter)}<button aria-label="関数の挿入"><i>fx</i></button></div>
        <label class="box input"><input aria-label="数式バー" .value=${"=B3"}>${chevron("#555")}</label>
      </div>
      <div class="work">
        <div class="sheet">${this.grid()}</div>
        <div class="vbar">
          ${this.btn("上へ", icons.up)}<div class="vtrack"><div class="thumb"></div></div>${this.btn("下へ", icons.down)}
        </div>
        <span class="handle"></span>
        <button class="smart" aria-label="オートフィル オプション">${icons.fillOptions}</button>
        <div class="ring"></div>
        <div class="note">最後のセルまで曜日が表示される</div>
        <div class="pointer">${icon(66, 56, svg`<path d="M6 50.500 64 3" stroke="#e60012" stroke-width="2"/><circle cx="6" cy="50.500" r="4" fill="#f00012"/>`)}</div>
      </div>
      <div class="sheets">
        <div class="arrows">${this.btn("前のシート", icons.prevDim)}${this.btn("次のシート", icons.nextDim)}</div>
        <button class="tab">Sheet1</button>
        ${this.btn("新しいシート", icons.add, "plus")}
        <div class="hbar"><span class="grip">${icons.dots}</span>${this.btn("左へ", icons.prev)}<div class="htrack"><div class="thumb"></div></div>${this.btn("右へ", icons.next)}</div>
      </div>
      <footer class="status">
        <span>準備完了</span>
        ${this.btn("マクロの記録", icons.macro, "macro")}
        <button class="a11y">${icons.access}アクセシビリティ: 検討が必要です</button>
        <div class="stats"><span>平均: 木</span><span>データの個数: 31</span><span>合計: 日</span></div>
        ${this.btn("標準", icons.normal, "view on")}${this.btn("ページ レイアウト表示", icons.page, "view")}${this.btn("改ページ プレビュー", icons.breaks, "view")}
        <div class="zoomer">
          <button>−</button>
          <input type="range" aria-label="ズーム" min="10" max="230" .value=${String(this.zoom)} @input=${(e: Event) => (this.zoom = +(e.target as HTMLInputElement).value)}>
          <button>+</button>
          <span class="pctl">${this.zoom}%</span>
        </div>
      </footer>
    </main></div>`;
  }
}
